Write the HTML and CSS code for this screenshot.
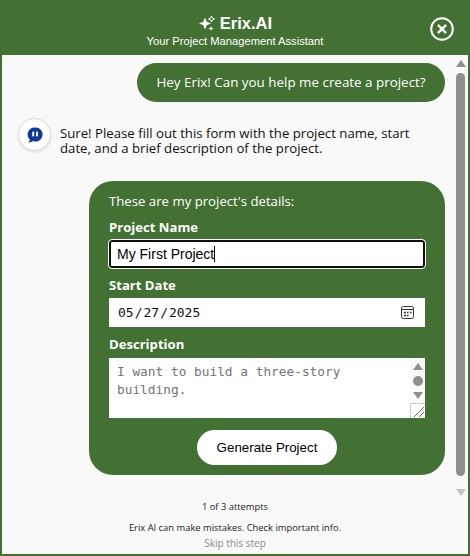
FILE: index.html
```html
<!DOCTYPE html>
<html lang="en">
<head>
  <meta charset="UTF-8">
  <meta name="viewport" content="width=device-width, initial-scale=1.0">
  <title>Erix.AI</title>
  <link rel="stylesheet" href="styles.css">
</head>
<body>

  <div class="ventana">
    <header class="cabecera">
      <div class="titulo">
        <div class="marca">
          <svg class="chispas" width="18" height="17" viewBox="0 0 18 17">
            <path d="M7 2.5 L8.7 6.8 L13 8.5 L8.7 10.2 L7 14.5 L5.3 10.2 L1 8.5 L5.3 6.8 Z" fill="#fff"/>
            <path d="M13.5 1 L14.4 3.1 L16.5 4 L14.4 4.9 L13.5 7 L12.6 4.9 L10.5 4 L12.6 3.1 Z" fill="none" stroke="#fff" stroke-width="1"/>
            <path d="M13 11 L13.7 12.8 L15.5 13.5 L13.7 14.2 L13 16 L12.3 14.2 L10.5 13.5 L12.3 12.8 Z" fill="#fff"/>
          </svg>
          <span>Erix.AI</span>
        </div>
        <div class="subtitulo">Your Project Management Assistant</div>
      </div>
      <button class="cerrar" aria-label="Close">
        <svg width="24" height="24" viewBox="0 0 24 24" fill="none" stroke="#fff" stroke-linecap="round">
          <circle cx="12" cy="12" r="10.8" stroke-width="2"/>
          <path d="M8.6 8.6 L15.4 15.4 M15.4 8.6 L8.6 15.4" stroke-width="2.4"/>
        </svg>
      </button>
    </header>

    <div class="cuerpo">
      <main class="chat">
        <div class="mensaje-usuario">Hey Erix! Can you help me create a project?</div>

        <div class="mensaje-bot">
          <div class="avatar">
            <svg width="18" height="18" viewBox="0 0 18 18">
              <path d="M9.5 1.5 A7 7 0 1 1 7 15 C5.8 16 4.2 16.6 2.2 16.4 C3.2 15.6 3.7 14.6 3.7 13.4 A7 7 0 0 1 9.5 1.5 Z" fill="#0f3a9c"/>
              <rect x="6.2" y="5.6" width="2" height="5" rx="1" fill="#fff"/>
              <rect x="10" y="5.6" width="2" height="5" rx="1" fill="#fff"/>
            </svg>
          </div>
          <p>Sure! Please fill out this form with the project name, start date, and a brief description of the project.</p>
        </div>

        <form class="formulario">
          <p class="intro">These are my project's details:</p>

          <label class="etiqueta">Project Name</label>
          <div class="campo-activo">My First Project<span class="cursor"></span></div>

          <label class="etiqueta">Start Date</label>
          <div class="fecha">
            <input class="campo-fecha" type="date" value="2025-05-27">
            <svg class="calendario" width="13" height="13" viewBox="0 0 13 13" fill="none" stroke="#333">
              <rect x="0.5" y="0.5" width="12" height="12" rx="2"/>
              <path d="M1 3.5 H12"/>
              <path d="M3 6.5 H5 M6 6.5 H7.5 M9 6.5 H10.5 M3 9.5 H5 M6 9.5 H7.5" stroke-width="1.4"/>
            </svg>
          </div>

          <label class="etiqueta etiqueta-descripcion">Description</label>
          <div class="area">
            <textarea rows="4" placeholder="I want to build a three-story building.

And as an office for the staff."></textarea>
            <div class="area-barra">
              <span class="flecha-arriba"></span>
              <span class="punto"></span>
              <span class="flecha-abajo"></span>
            </div>
            <div class="agarre">
              <svg width="14" height="14" viewBox="0 0 14 14" stroke="#666" stroke-width="1">
                <path d="M3 13 L13 3 M8 13 L13 8"/>
              </svg>
            </div>
          </div>

          <button class="boton-generar" type="button">Generate Project</button>
        </form>

        <div class="pie">
          <p class="intentos">1 of 3 attempts</p>
          <p class="aviso">Erix AI can make mistakes. Check important info.</p>
          <a class="saltar" href="#">Skip this step</a>
        </div>
      </main>

      <div class="barra">
        <span class="flecha-arriba"></span>
        <div class="barra-pulgar"></div>
        <span class="flecha-abajo"></span>
      </div>
    </div>
  </div>

</body>
</html>
```

FILE: styles.css
```css
* {
  margin: 0;
  padding: 0;
  box-sizing: border-box;
}

body {
  font-family: "Open Sans", "Noto Sans", sans-serif;
  background-color: #437033;
  color: #000;
}

.ventana {
  width: 470px;
  height: 556px;
  display: flex;
  flex-direction: column;
  padding: 0 2px 2px;
  background-color: #437033;
  overflow: hidden;
}

.cabecera {
  height: 55px;
  flex-shrink: 0;
  display: flex;
  align-items: center;
  justify-content: center;
  position: relative;
  color: #fff;
  text-align: center;
}

.marca {
  display: flex;
  align-items: center;
  justify-content: center;
  gap: 4px;
  font-family: "Liberation Sans", Arial, sans-serif;
  font-size: 16.5px;
  font-weight: bold;
  line-height: 20px;
  padding-top: 7px;
}

.subtitulo {
  font-family: "Liberation Sans", Arial, sans-serif;
  font-size: 11.2px;
  line-height: 16px;
}

.cerrar {
  position: absolute;
  right: 14px;
  top: 17px;
  width: 24px;
  height: 24px;
  background: none;
  border: none;
}

.cuerpo {
  flex: 1;
  display: flex;
  min-height: 0;
  background-color: #f9f9f9;
}

.chat {
  flex: 1;
  display: flex;
  flex-direction: column;
  padding: 8px 7px 0 16px;
}

.mensaje-usuario {
  align-self: flex-end;
  width: 308px;
  height: 39px;
  line-height: 39px;
  text-align: center;
  background-color: #437033;
  color: #fff;
  border-radius: 20px;
  font-size: 13.4px;
}

.mensaje-bot {
  display: flex;
  align-items: flex-start;
  gap: 9px;
  margin-top: 16px;
  height: 63px;
  font-size: 13.2px;
  line-height: 15px;
}

.mensaje-bot p {
  width: 355px;
  padding-top: 8px;
  color: #111;
}

.avatar {
  width: 33px;
  height: 33px;
  border-radius: 50%;
  background-color: #fff;
  border: 1px solid #ddd;
  box-shadow: 0 1px 3px rgba(0, 0, 0, 0.12);
  display: flex;
  align-items: center;
  justify-content: center;
  flex-shrink: 0;
}

.formulario {
  align-self: flex-end;
  width: 356px;
  height: 294px;
  background-color: #437033;
  border-radius: 24px;
  padding: 12px 20px 10px;
  color: #fff;
  display: flex;
  flex-direction: column;
}

.intro {
  font-size: 13.2px;
  line-height: 16px;
}

.etiqueta {
  font-size: 13.1px;
  font-weight: bold;
  line-height: 19px;
  margin-top: 8px;
  margin-bottom: 3px;
}

.intro + .etiqueta {
  margin-top: 9px;
}

.etiqueta-descripcion {
  margin-bottom: 4px;
}

.campo-activo {
  height: 28px;
  flex-shrink: 0;
  line-height: 24px;
  padding-left: 6px;
  background-color: #fff;
  border: 2px solid #101010;
  outline: 1px solid #fff;
  border-radius: 3px;
  color: #000;
  font-family: "Liberation Sans", Arial, sans-serif;
  font-size: 14px;
}

.cursor {
  display: inline-block;
  width: 1px;
  height: 16px;
  background-color: #000;
  vertical-align: -3px;
}

.fecha {
  position: relative;
  height: 29px;
  flex-shrink: 0;
}

.campo-fecha {
  display: block;
  width: 100%;
  height: 29px;
  padding: 0 8px;
  background-color: #fff;
  border: none;
  font-family: "DejaVu Sans Mono", "Liberation Mono", monospace;
  font-size: 13px;
  color: #111;
}

.campo-fecha::-webkit-calendar-picker-indicator {
  opacity: 0;
}

.calendario {
  position: absolute;
  top: 8px;
  right: 11px;
  pointer-events: none;
}

.area {
  position: relative;
  height: 60px;
  flex-shrink: 0;
  background-color: #fff;
  overflow: hidden;
}

.area textarea {
  display: block;
  width: 100%;
  height: 60px;
  padding: 5px 8px;
  border: none;
  outline: none;
  resize: none;
  overflow: hidden;
  font-family: "DejaVu Sans Mono", "Liberation Mono", monospace;
  font-size: 12.8px;
  line-height: 18px;
}

.area textarea::placeholder {
  color: #757575;
}

/* barra de la descripcion */
.area-barra {
  position: absolute;
  top: 0;
  right: 0;
  width: 15px;
  height: 45px;
  background-color: #fafafa;
  display: flex;
  flex-direction: column;
  align-items: center;
  justify-content: space-between;
  padding: 5px 0 4px;
}

.punto {
  width: 10px;
  height: 10px;
  border-radius: 50%;
  background-color: #8f8f8f;
}

.agarre {
  position: absolute;
  right: 0;
  bottom: 0;
  width: 15px;
  height: 15px;
  background-color: #fff;
  border-left: 1px solid #ccc;
  border-top: 1px solid #ccc;
}

.agarre svg {
  display: block;
}

.flecha-arriba {
  width: 0;
  height: 0;
  border-left: 5px solid transparent;
  border-right: 5px solid transparent;
  border-bottom: 7px solid #8f8f8f;
}

.flecha-abajo {
  width: 0;
  height: 0;
  border-left: 5px solid transparent;
  border-right: 5px solid transparent;
  border-top: 7px solid #8f8f8f;
}

.boton-generar {
  align-self: center;
  width: 140px;
  height: 35px;
  flex-shrink: 0;
  margin-top: 12px;
  background-color: #fff;
  border: none;
  border-radius: 18px;
  color: #000;
  font-family: "Liberation Sans", Arial, sans-serif;
  font-size: 13.33px;
}

.pie {
  padding-left: 7px;
  text-align: center;
  color: #222;
  font-size: 9.4px;
}

.intentos {
  margin-top: 25px;
  line-height: 13px;
}

.aviso {
  margin-top: 8px;
  line-height: 13px;
}

.saltar {
  display: block;
  margin-top: 2px;
  color: #8a8a8a;
  font-size: 10px;
  line-height: 14px;
  text-decoration: none;
}

.barra {
  width: 16px;
  flex-shrink: 0;
  display: flex;
  flex-direction: column;
  align-items: center;
  padding: 5px 0 0 1px;
  background-color: #f9f9f9;
}

.barra-pulgar {
  width: 9px;
  height: 403px;
  margin-top: 6px;
  background-color: #8f8f8f;
  border-radius: 5px;
}

.barra .flecha-abajo {
  margin-top: 13px;
  border-top-color: #c4c4c4;
}
```
